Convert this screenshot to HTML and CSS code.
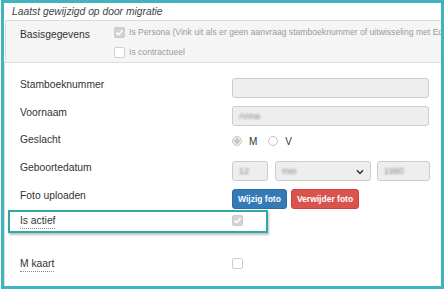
FILE: index.html
```html
<!DOCTYPE html>
<html lang="nl">

<head>
    <meta charset="utf-8">
    <meta name="viewport" content="width=device-width, initial-scale=1.0">
    <title>Persoonsgegevens</title>
    <link rel="stylesheet" href="styles.css">
</head>

<body>
    <div class="kader">
        <p class="gewijzigd">Laatst gewijzigd op door migratie</p>

        <section class="basis">
            <div class="basis-label">Basisgegevens</div>
            <div class="basis-opties">
                <div class="optie">
                    <span class="vink aan"><svg viewBox="0 0 11 11" width="11" height="11"><path d="M2.5 5.6 L4.6 7.7 L8.6 3.3" fill="none" stroke="#fff" stroke-width="1.6"/></svg></span>
                    <span>Is Persona (Vink uit als er geen aanvraag stamboeknummer of uitwisseling met Edison mag gebeuren)</span>
                </div>
                <div class="optie">
                    <span class="vink"></span>
                    <span>Is contractueel</span>
                </div>
            </div>
        </section>

        <section class="velden">
            <div class="rij r28">
                <label class="label">Stamboeknummer</label>
                <div class="invoer breed"></div>
            </div>
            <div class="rij r28">
                <label class="label">Voornaam</label>
                <div class="invoer breed"><span class="wazig">Anna</span></div>
            </div>
            <div class="rij r27">
                <label class="label top0">Geslacht</label>
                <div class="radios">
                    <span class="radio aan"></span><span class="radio-tekst">M</span>
                    <span class="radio"></span><span class="radio-tekst">V</span>
                </div>
            </div>
            <div class="rij r28">
                <label class="label">Geboortedatum</label>
                <div class="datum">
                    <div class="invoer dag"><span class="wazig">12</span></div>
                    <div class="invoer maand"><span class="wazig">mei</span>
                        <svg class="pijl" viewBox="0 0 8 6" width="8" height="6"><path d="M1 1.2 L4 4.4 L7 1.2" fill="none" stroke="#333" stroke-width="1.5"/></svg>
                    </div>
                    <div class="invoer jaar"><span class="wazig">1980</span></div>
                </div>
            </div>
            <div class="rij r26">
                <label class="label">Foto uploaden</label>
                <div class="knoppen">
                    <button class="knop blauw">Wijzig foto</button>
                    <button class="knop rood">Verwijder foto</button>
                </div>
            </div>
            <div class="rij r43">
                <label class="label top0"><span class="stippel">Is actief</span></label>
                <span class="vink aan"><svg viewBox="0 0 11 11" width="11" height="11"><path d="M2.5 5.6 L4.6 7.7 L8.6 3.3" fill="none" stroke="#fff" stroke-width="1.6"/></svg></span>
            </div>
            <div class="rij">
                <label class="label top0"><span class="stippel">M kaart</span></label>
                <span class="vink"></span>
            </div>
        </section>

        <div class="markering"></div>
    </div>
</body>

</html>
```

FILE: styles.css
```css
body {
    margin: 0;
    font-family: "Liberation Sans", Arial, sans-serif;
    color: #333;
    background: #fff;
}

.kader {
    position: relative;
    margin-left: 1px;
    width: 443px;
    height: 289px;
    box-sizing: border-box;
    border: 3px solid #3fb4be;
    overflow: hidden;
}

.gewijzigd {
    margin: 0;
    height: 17px;
    padding-left: 8px;
    padding-top: 2px;
    box-sizing: border-box;
    font-size: 10.3px;
    line-height: 13px;
    font-style: italic;
    color: #444;
}

/* grijze blok bovenaan */
.basis {
    display: flex;
    margin-left: 1px;
    width: 490px;
    height: 43px;
    box-sizing: border-box;
    border: 1px solid #ddd;
    background: #f5f5f5;
    padding: 6px 0 0 14px;
}

.basis-label {
    width: 94px;
    flex-shrink: 0;
    font-size: 10.3px;
    line-height: 12px;
    padding-top: 2px;
}

.optie {
    display: flex;
    gap: 4px;
    height: 20px;
    align-items: flex-start;
    font-size: 8.6px;
    line-height: 11px;
    color: #9a9a9a;
    white-space: nowrap;
}

.vink {
    display: inline-block;
    flex-shrink: 0;
    width: 11px;
    height: 11px;
    box-sizing: border-box;
    border: 1px solid #cfcfcf;
    border-radius: 2px;
    background: #fff;
}

.vink.aan {
    background: #d3d3d3;
    border-color: #cacaca;
}

.vink svg {
    display: block;
    margin: -1px;
}

/* formulier */
.velden {
    width: 490px;
    height: 281px;
    margin-top: -1px;
    box-sizing: border-box;
    border: 1px solid #ddd;
    border-bottom-width: 2px;
    padding: 15px 0 0 15px;
}

.rij {
    display: flex;
    align-items: flex-start;
}

.r28 { height: 28px; }
.r27 { height: 27px; }
.r26 { height: 26px; }
.r43 { height: 43px; }

.label {
    width: 212px;
    flex-shrink: 0;
    font-size: 10.3px;
    line-height: 12px;
    padding-top: 1px;
}

.label.top0 {
    padding-top: 0;
}

.stippel {
    display: inline-block;
    padding-bottom: 1px;
    border-bottom: 1px dotted #888;
}

.invoer {
    position: relative;
    height: 20px;
    box-sizing: border-box;
    border: 1px solid #ccc;
    border-radius: 3px;
    background: #eee;
    font-size: 9px;
    line-height: 18px;
    padding-left: 6px;
}

.breed { width: 197px; }
.dag { width: 36px; }
.maand { width: 96px; }
.jaar { width: 53px; }

.wazig {
    color: #8a8a8a;
    filter: blur(1px);
}

.pijl {
    position: absolute;
    right: 6px;
    top: 7px;
}

.datum {
    display: flex;
    gap: 7px;
}

.datum .jaar {
    margin-left: -1px;
}

.radios {
    display: flex;
    align-items: center;
    height: 14px;
    font-size: 10px;
}

.radio {
    width: 10px;
    height: 10px;
    box-sizing: border-box;
    border: 1px solid #c4c4c4;
    border-radius: 50%;
    background: #fff;
}

.radio.aan {
    background: radial-gradient(circle, #c8c8c8 0 2.5px, #f2f2f2 3px);
}

.radio-tekst {
    margin-left: 7px;
    margin-right: 11px;
}

.knoppen {
    display: flex;
    gap: 4px;
}

.knop {
    height: 20px;
    padding: 0 5px;
    border: 1px solid;
    border-radius: 3px;
    font-family: "Liberation Sans", Arial, sans-serif;
    font-size: 8.5px;
    font-weight: bold;
    color: #fff;
}

.blauw {
    background-color: #337ab7;
    border-color: #2e6da4;
}

.rood {
    background-color: #d9534f;
    border-color: #d43f3a;
}

/* markering rond "Is actief" */
.markering {
    position: absolute;
    left: 4px;
    top: 207px;
    width: 260px;
    height: 23px;
    box-sizing: border-box;
    border: 2px solid #2fa9a6;
    box-shadow: 1px 2px 2px rgba(0, 0, 0, 0.25);
}
```
